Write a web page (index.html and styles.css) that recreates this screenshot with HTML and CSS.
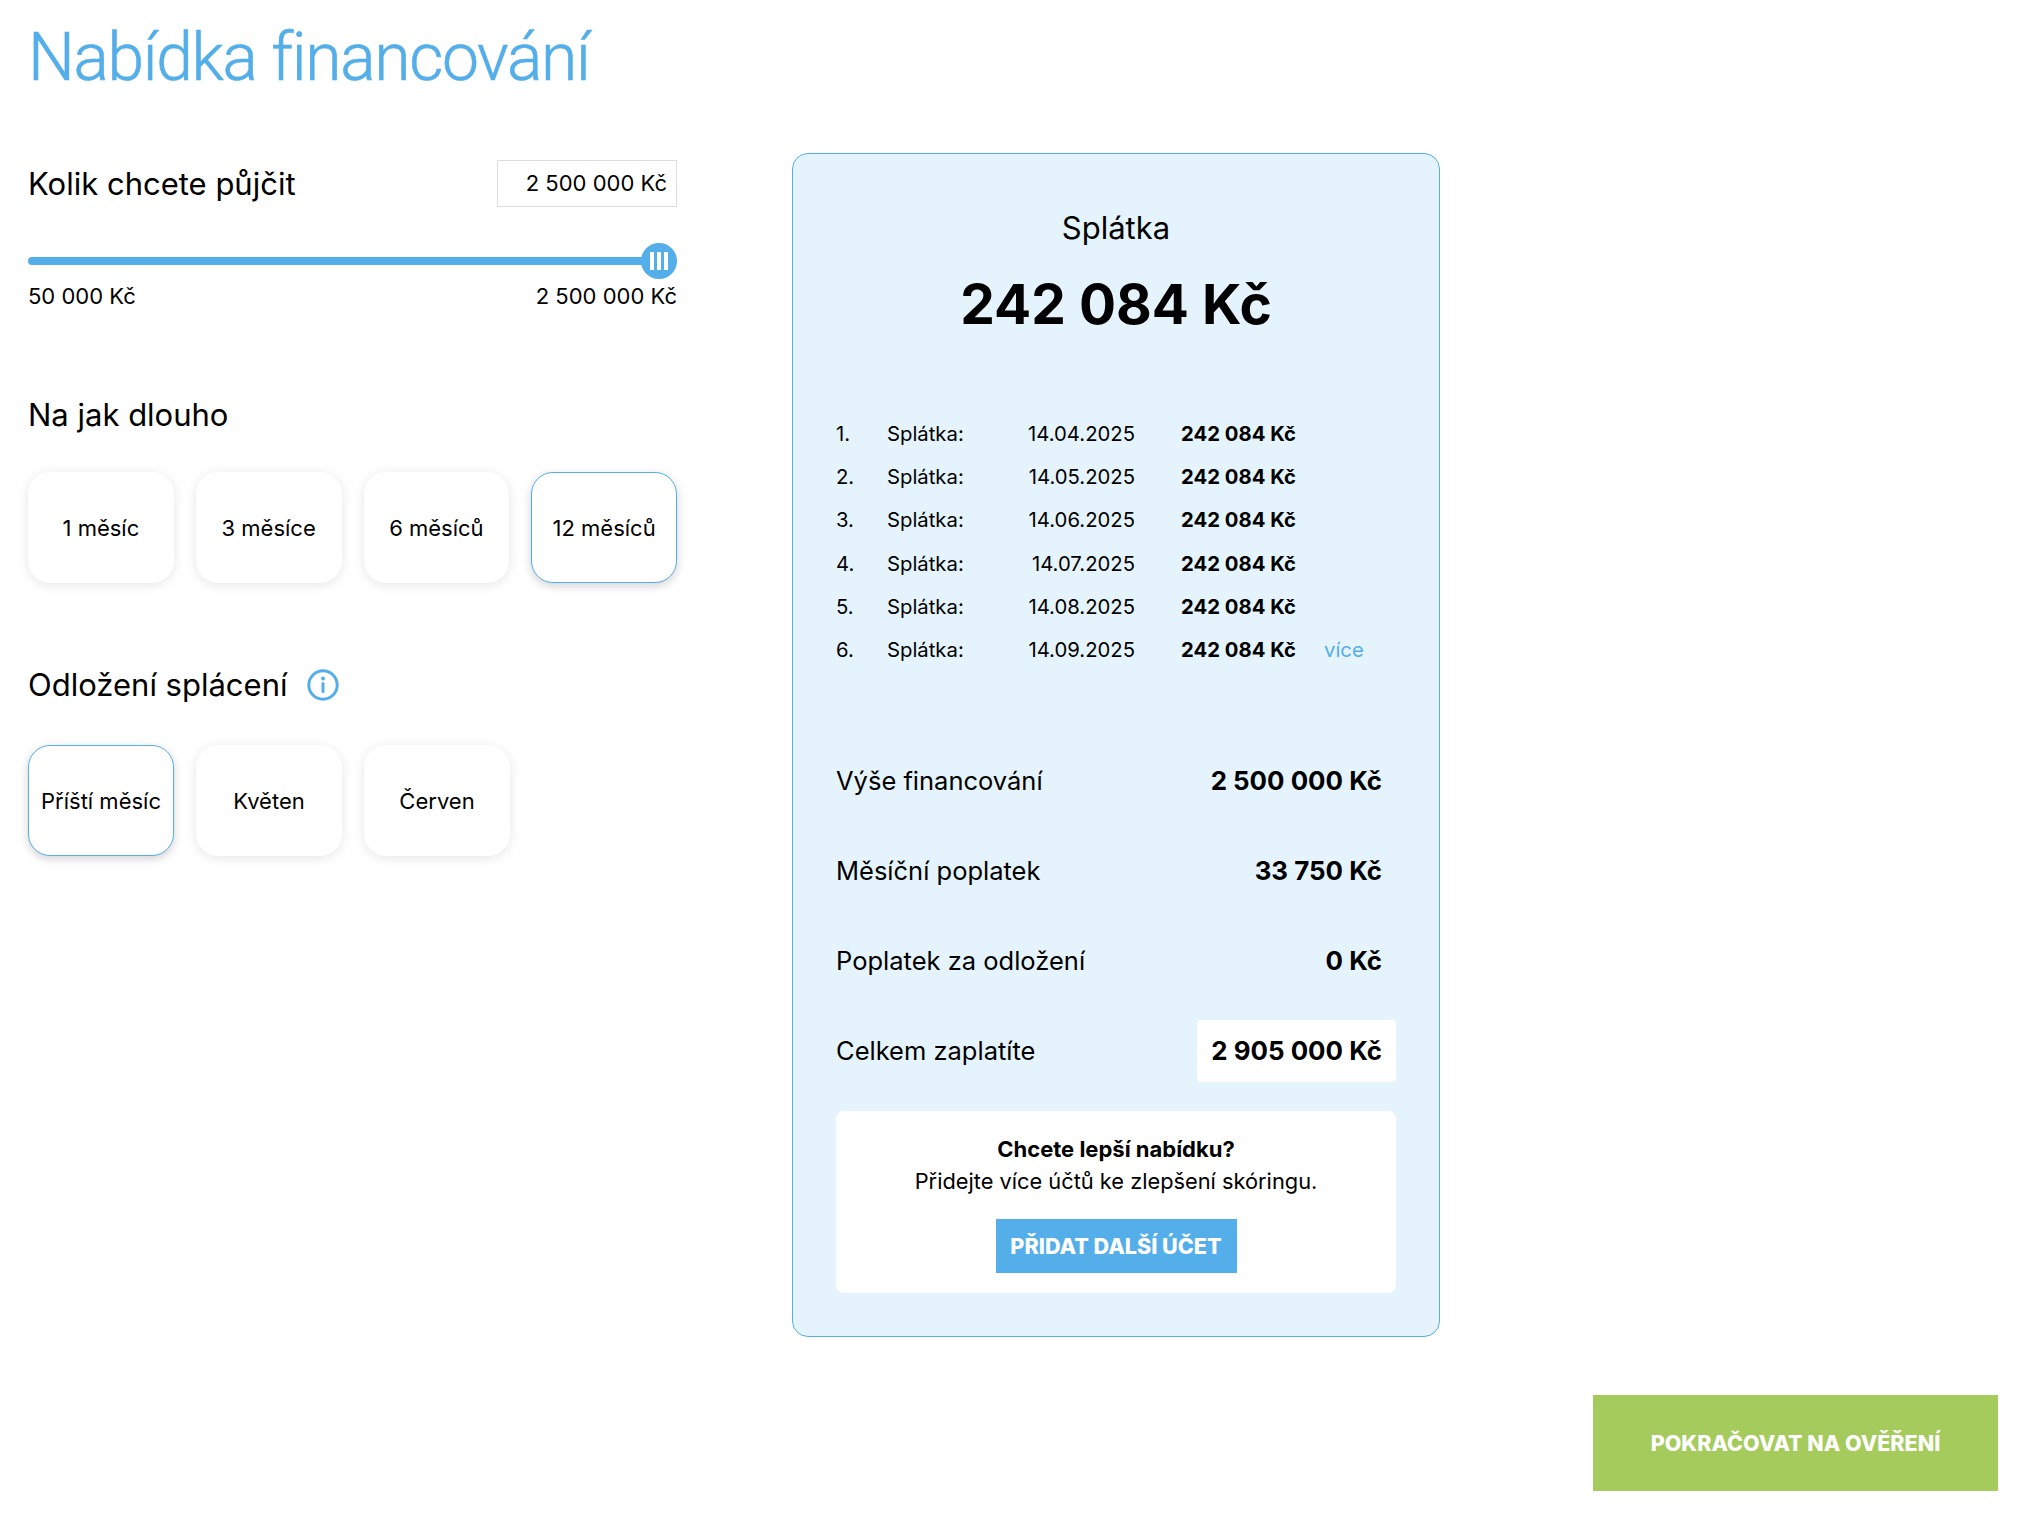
FILE: index.html
```html
<!DOCTYPE html>
<html lang="cs">
<head>
<meta charset="utf-8">
<title>Nabídka financování</title>
<link rel="stylesheet" href="styles.css">
</head>
<body>
<h1 class="title">Nabídka financování</h1>
<main class="layout">
  <section class="form">
    <div class="amount-head">
      <h2 class="heading heading-amount">Kolik chcete půjčit</h2>
      <div class="amount-input">2 500 000 Kč</div>
    </div>
    <div class="slider"><div class="slider-thumb"><i></i><i></i><i></i></div></div>
    <div class="slider-labels"><span>50 000 Kč</span><span>2 500 000 Kč</span></div>

    <h2 class="heading heading-term">Na jak dlouho</h2>
    <div class="options">
      <div class="option">1 měsíc</div>
      <div class="option">3 měsíce</div>
      <div class="option">6 měsíců</div>
      <div class="option selected">12 měsíců</div>
    </div>

    <div class="defer-head">
      <h2 class="heading">Odložení splácení</h2>
      <svg class="info" viewBox="0 0 32 32" width="32" height="32" aria-hidden="true">
        <circle cx="16" cy="16" r="14.2" fill="none" stroke="#53aee9" stroke-width="3"/>
        <circle cx="16" cy="9.4" r="2" fill="#53aee9"/>
        <rect x="14.5" y="13" width="3" height="11" rx="1.5" fill="#53aee9"/>
      </svg>
    </div>
    <div class="options">
      <div class="option selected">Příští měsíc</div>
      <div class="option">Květen</div>
      <div class="option">Červen</div>
    </div>
  </section>

  <aside class="card">
    <div class="card-label">Splátka</div>
    <div class="card-amount">242 084 Kč</div>
    <div class="schedule">
      <span>1.</span><span>Splátka:</span><span class="date">14.04.2025</span><b>242 084 Kč</b><span></span>
      <span>2.</span><span>Splátka:</span><span class="date">14.05.2025</span><b>242 084 Kč</b><span></span>
      <span>3.</span><span>Splátka:</span><span class="date">14.06.2025</span><b>242 084 Kč</b><span></span>
      <span>4.</span><span>Splátka:</span><span class="date">14.07.2025</span><b>242 084 Kč</b><span></span>
      <span>5.</span><span>Splátka:</span><span class="date">14.08.2025</span><b>242 084 Kč</b><span></span>
      <span>6.</span><span>Splátka:</span><span class="date">14.09.2025</span><b>242 084 Kč</b><a class="more">více</a>
    </div>
    <div class="summary">
      <div class="summary-row"><span>Výše financování</span><b class="value">2 500 000 Kč</b></div>
      <div class="summary-row"><span>Měsíční poplatek</span><b class="value">33 750 Kč</b></div>
      <div class="summary-row"><span>Poplatek za odložení</span><b class="value">0 Kč</b></div>
      <div class="summary-row"><span>Celkem zaplatíte</span><b class="value total">2 905 000 Kč</b></div>
    </div>
    <div class="promo">
      <div class="promo-title">Chcete lepší nabídku?</div>
      <div class="promo-text">Přidejte více účtů ke zlepšení skóringu.</div>
      <div class="promo-button">PŘIDAT DALŠÍ ÚČET</div>
    </div>
  </aside>
</main>
<footer class="footer"><div class="continue">POKRAČOVAT NA OVĚŘENÍ</div></footer>
</body>
</html>
```
FILE: styles.css
```css
* { box-sizing: border-box; }
html, body { margin: 0; padding: 0; }
body {
  width: 2024px;
  height: 1518px;
  padding: 0 26px 0 28px;
  background: #fff;
  color: #000;
  font-family: Inter, "Liberation Sans", sans-serif;
  overflow: hidden;
}
.title {
  margin: 0;
  padding-top: 18px;
  height: 153px;
  font-family: Roboto, "Liberation Sans", sans-serif;
  font-weight: 300;
  font-size: 66px;
  line-height: 80px;
  letter-spacing: -1.35px;
  -webkit-text-stroke: .6px #53aee9;
  color: #53aee9;
}
.layout { display: grid; grid-template-columns: 649px 648px; column-gap: 115px; align-items: start; }
.heading { margin: 0; font-size: 31px; font-weight: 400; line-height: 38px; }
.heading-amount { padding-top: 2px; }
.amount-head { display: flex; justify-content: space-between; align-items: center; height: 54px; margin-top: 3px; }
.amount-input {
  width: 180px; height: 47px; border: 1px solid #ddd;
  font-size: 22px; line-height: 45px; text-align: right; padding-right: 9px;
}
.slider { position: relative; height: 8px; margin-top: 47px; border-radius: 4px; background: #53aee9; }
.slider-thumb {
  position: absolute; right: 0; top: -14px; width: 36px; height: 36px; border-radius: 50%;
  background: #53aee9; display: flex; justify-content: center; align-items: center; gap: 3px;
}
.slider-thumb i { display: block; width: 4px; height: 18px; background: #fff; }
.slider-labels { display: flex; justify-content: space-between; margin-top: 17px; font-size: 22px; line-height: 28px; }
.heading-term { margin-top: 86px; }
.options { display: flex; gap: 22px; margin-top: 38px; }
.option {
  width: 146px; height: 111px; border-radius: 22px; background: #fff;
  display: flex; align-items: center; justify-content: center;
  font-size: 22px; box-shadow: 0 2px 12px rgba(0,0,0,.1);
}
.option.selected { border: 1px solid #53aee9; box-shadow: 0 3px 10px rgba(0,0,0,.18); }
.defer-head { display: flex; align-items: center; gap: 20px; margin-top: 83px; padding-bottom: 3px; }
.card {
  height: 1184px; padding: 50px 43px 0; background: #e5f4fc;
  border: 1px solid #53aee9; border-radius: 16px;
}
.card-label { text-align: center; font-size: 31px; line-height: 48px; }
.card-amount { text-align: center; font-size: 55px; font-weight: 700; line-height: 70px; margin-top: 17px; }
.schedule {
  display: grid; grid-template-columns: 51px 110px 138px 189px auto; grid-auto-rows: 43.2px;
  align-items: center; margin-top: 73px; font-size: 20.3px;
}
.schedule b { font-weight: 700; padding-left: 46px; white-space: nowrap; }
.date { text-align: right; }
.more { color: #53aee9; }
.summary { margin-top: 64px; }
.summary-row { display: flex; justify-content: space-between; align-items: center; height: 90px; font-size: 25.5px; }
.value { font-weight: 700; font-size: 25.9px; padding-right: 14px; }
.total { width: 199px; height: 62px; margin-top: 1px; background: #fff; border-radius: 4px; display: flex; align-items: center; justify-content: flex-end; }
.promo {
  display: flex; flex-direction: column; align-items: center;
  height: 182px; margin-top: 16px; padding-top: 22px; background: #fff; border-radius: 8px;
}
.promo-title { font-size: 22px; font-weight: 700; line-height: 32px; }
.promo-text { font-size: 21.8px; line-height: 32px; }
.promo-button {
  width: 241px; height: 54px; margin-top: 22px; background: #53aee9; color: #fff;
  font-size: 21.6px; font-weight: 800; line-height: 54px; text-align: center;
}
.footer { display: flex; justify-content: flex-end; margin-top: 58px; }
.continue {
  width: 405px; height: 96px; background: #a4cb5c; color: #fff;
  font-size: 21.5px; font-weight: 800; line-height: 96px; text-align: center;
}
```
